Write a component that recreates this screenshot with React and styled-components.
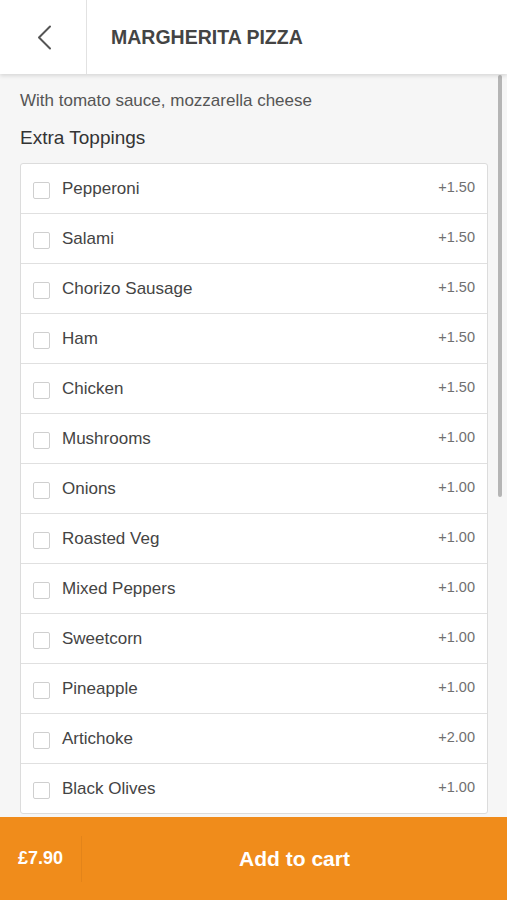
import React, { useState } from "react";
import styled, { createGlobalStyle } from "styled-components";

const GlobalStyle = createGlobalStyle`
  html, body {
    margin: 0;
    padding: 0;
    height: 100%;
  }
  body {
    font-family: "Liberation Sans", Arial, Helvetica, sans-serif;
    background: #f6f6f6;
    color: #444;
  }
  * {
    box-sizing: border-box;
  }
`;

// Page shell -----------------------------
const Page = styled.div`
  display: flex;
  flex-direction: column;
  height: 100vh;
  overflow: hidden;
`;

// Header ---------------------------------
const Header = styled.header`
  position: relative;
  z-index: 1;
  display: flex;
  align-items: stretch;
  height: 74px;
  flex-shrink: 0;
  background: #fff;
  box-shadow: 0 2px 4px rgba(0, 0, 0, 0.12);
`;

const BackButton = styled.button`
  display: flex;
  align-items: center;
  justify-content: center;
  width: 87px;
  padding: 0 0 0 1px;
  border: none;
  border-right: 1px solid #e2e2e2;
  background: transparent;
  cursor: pointer;
`;

const Title = styled.h1`
  margin: 0;
  display: flex;
  align-items: center;
  padding-left: 24px;
  font-size: 19.5px;
  font-weight: 700;
  color: #444;
`;

// Scrolling body -------------------------
const BodyWrap = styled.div`
  position: relative;
  flex: 1;
  min-height: 0;
`;

const Body = styled.main`
  height: 100%;
  overflow: hidden;
  padding: 17px 19px 0 20px;
`;

// thin scroll indicator drawn over the content edge
const ScrollThumb = styled.div`
  position: absolute;
  top: 1px;
  right: 5px;
  width: 4px;
  height: 422px;
  border-radius: 2px;
  background: #b5b5b5;
`;

const Description = styled.p`
  margin: 0;
  font-size: 17px;
  line-height: 20px;
  color: #555;
`;

const SectionTitle = styled.h2`
  margin: 16px 0 14px;
  font-size: 19px;
  line-height: 22px;
  font-weight: 400;
  color: #333;
`;

const OptionList = styled.ul`
  list-style: none;
  margin: 0;
  padding: 0;
  background: #fff;
  border: 1px solid #dcdcdc;
  border-radius: 3px;
`;

const Option = styled.li`
  display: flex;
  align-items: center;
  height: 50px;
  padding: 0 12px;
  border-top: 1px solid #e0e0e0;
  cursor: pointer;

  &:first-child {
    border-top: none;
    height: 49px;
  }
`;

const Box = styled.span`
  width: 17px;
  height: 17px;
  margin-top: 4px;
  flex-shrink: 0;
  border: 1px solid ${(p) => (p.$checked ? "#f08c1b" : "#cfcfcf")};
  border-radius: 2px;
  background: ${(p) => (p.$checked ? "#f08c1b" : "#fff")};
`;

const Label = styled.span`
  flex: 1;
  margin-left: 12px;
  font-size: 17px;
  color: #444;
`;

const Price = styled.span`
  margin-bottom: 3px;
  font-size: 14.5px;
  color: #707070;
`;

// Footer ---------------------------------
const Footer = styled.footer`
  display: flex;
  align-items: center;
  height: 83px;
  flex-shrink: 0;
  background: #f08c1b;
  color: #fff;
  font-weight: 700;
`;

const Total = styled.div`
  width: 82px;
  height: 46px;
  display: flex;
  align-items: center;
  padding-left: 18px;
  font-size: 18px;
  border-right: 1px solid #e3841a;
`;

const CartButton = styled.button`
  flex: 1;
  height: 100%;
  border: none;
  background: transparent;
  color: #fff;
  font-family: inherit;
  font-size: 21px;
  font-weight: 700;
  cursor: pointer;
`;

const toppings = [
  { name: "Pepperoni", price: 1.5 },
  { name: "Salami", price: 1.5 },
  { name: "Chorizo Sausage", price: 1.5 },
  { name: "Ham", price: 1.5 },
  { name: "Chicken", price: 1.5 },
  { name: "Mushrooms", price: 1.0 },
  { name: "Onions", price: 1.0 },
  { name: "Roasted Veg", price: 1.0 },
  { name: "Mixed Peppers", price: 1.0 },
  { name: "Sweetcorn", price: 1.0 },
  { name: "Pineapple", price: 1.0 },
  { name: "Artichoke", price: 2.0 },
  { name: "Black Olives", price: 1.0 },
];

const BASE_PRICE = 7.9;

export default function App() {
  const [picked, setPicked] = useState([]);

  const toggle = (name) => {
    setPicked((prev) =>
      prev.includes(name) ? prev.filter((n) => n !== name) : [...prev, name]
    );
  };

  const total = toppings
    .filter((t) => picked.includes(t.name))
    .reduce((sum, t) => sum + t.price, BASE_PRICE);

  return (
    <Page>
      <GlobalStyle />
      <Header>
        <BackButton aria-label="Back">
          <svg width="16" height="25" viewBox="0 0 16 25" fill="none">
            <path
              d="M14 1.5 L3 12.5 L14 23.5"
              stroke="#555"
              strokeWidth="2"
              strokeLinecap="round"
              strokeLinejoin="round"
            />
          </svg>
        </BackButton>
        <Title>MARGHERITA PIZZA</Title>
      </Header>

      <BodyWrap>
        <Body>
          <Description>With tomato sauce, mozzarella cheese</Description>
          <SectionTitle>Extra Toppings</SectionTitle>
          <OptionList>
            {toppings.map((t) => (
              <Option key={t.name} onClick={() => toggle(t.name)}>
                <Box $checked={picked.includes(t.name)} />
                <Label>{t.name}</Label>
                <Price>+{t.price.toFixed(2)}</Price>
              </Option>
            ))}
          </OptionList>
        </Body>
        <ScrollThumb />
      </BodyWrap>

      <Footer>
        <Total>£{total.toFixed(2)}</Total>
        <CartButton>Add to cart</CartButton>
      </Footer>
    </Page>
  );
}
